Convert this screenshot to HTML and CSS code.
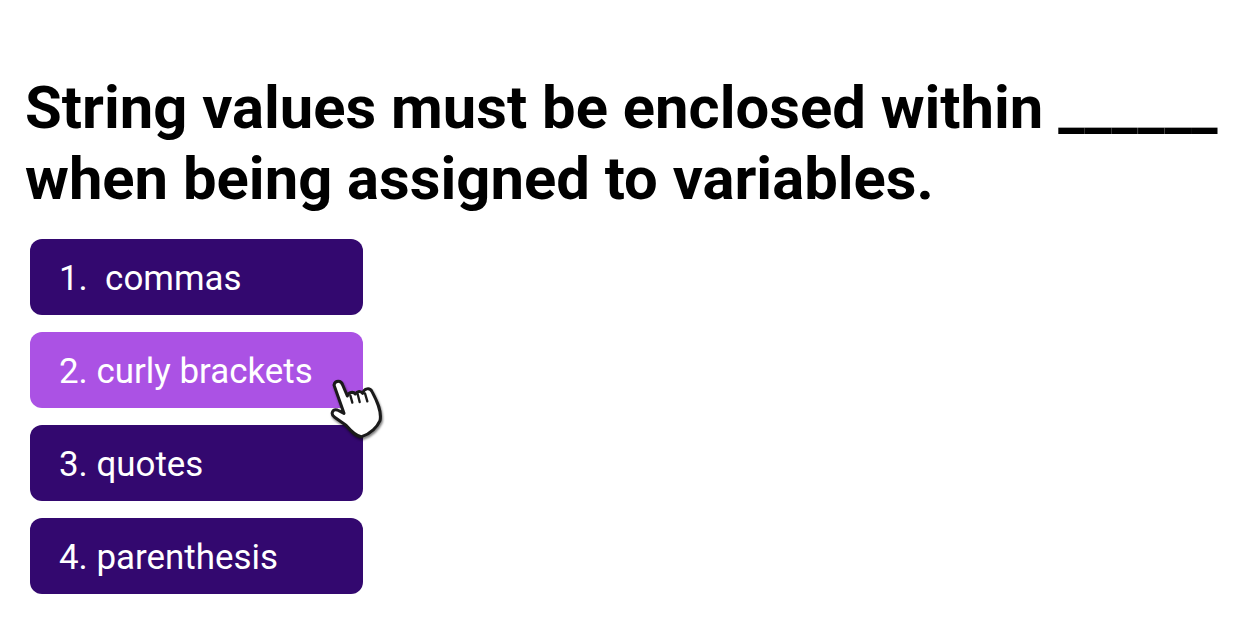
FILE: index.html
```html
<!DOCTYPE html>
<html lang="en">
<head>
    <meta charset="UTF-8">
    <title>Quiz</title>
    <link rel="stylesheet" href="styles.css">
</head>
<body>
    <main class="quiz">
        <h1 class="question">String values must be enclosed within ______ when being assigned to variables.</h1>
        <div class="answers">
            <button class="answer">1.&nbsp; commas</button>
            <div class="answer-wrap">
                <button class="answer answer-hover">2. curly brackets</button>
                <svg class="cursor" viewBox="45 45 180 195" width="60" height="65">
                    <path d="M72 75 C75 60 94 60 98 75 L112 108 C116 96 130 94 136 102 C142 92 152 92 158 100 C162 84 180 82 186 95 C202 125 216 155 210 182 C202 200 182 222 155 230 C138 230 122 212 108 196 L74 172 C60 162 68 146 82 150 L102 160 Z" fill="#fff" stroke="#1a1a1a" stroke-width="9" stroke-linejoin="round"/>
                    <path d="M121 106 L127 128 M143 102 L149 126 M165 100 L172 124" fill="none" stroke="#1a1a1a" stroke-width="7" stroke-linecap="round"/>
                </svg>
            </div>
            <button class="answer">3. quotes</button>
            <button class="answer">4. parenthesis</button>
        </div>
    </main>
</body>
</html>
```

FILE: styles.css
```css
body {
    margin: 0;
    background-color: #fff;
    font-family: Roboto, sans-serif;
}
.quiz {
    padding: 73px 0 0 25px;
}
.question {
    margin: 0 0 24px;
    font-size: 59.75px;
    font-weight: 700;
    line-height: 71px;
    color: #000;
}
.answers {
    display: flex;
    flex-direction: column;
    gap: 17px;
    margin-left: 5px;
}
.answer-wrap {
    position: relative;
    width: 333px;
}
.answer {
    display: block;
    width: 333px;
    height: 76px;
    padding: 2px 0 0 29px;
    border: none;
    border-radius: 12px;
    background-color: #33086f;
    color: #fff;
    font-family: Roboto, sans-serif;
    font-size: 34.9px;
    text-align: left;
}
.answer-hover {
    background-color: #ab52e4;
}
.cursor {
    position: absolute;
    left: 295px;
    top: 43px;
    filter: drop-shadow(1px 2px 1px rgba(0, 0, 0, 0.5));
}
```
